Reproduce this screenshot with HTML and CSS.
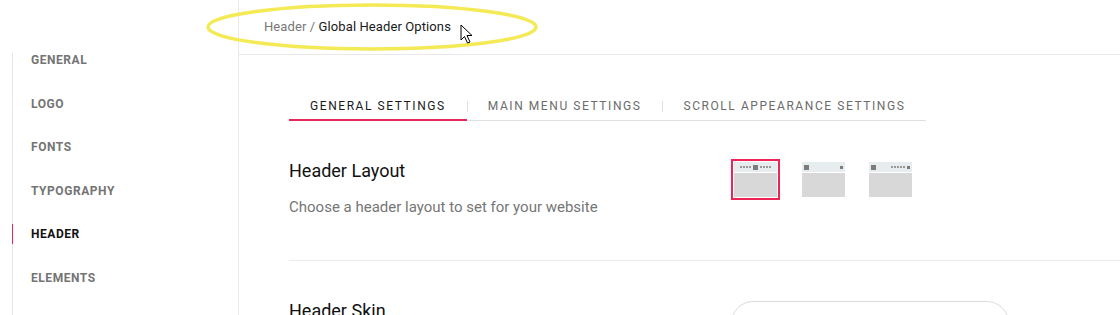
FILE: index.html
```html
<!DOCTYPE html>
<html lang="en">
<head>
  <meta charset="utf-8">
  <title>Global Header Options</title>
  <link rel="stylesheet" href="styles.css">
</head>
<body>
  <div class="page">
    <!-- Left settings menu -->
    <aside class="sidebar">
      <ul class="nav">
        <li>General</li>
        <li>Logo</li>
        <li>Fonts</li>
        <li>Typography</li>
        <li class="active">Header</li>
        <li>Elements</li>
      </ul>
    </aside>

    <main class="main">
      <div class="topbar">
        <span class="crumb-parent">Header</span> / <span class="crumb-current">Global Header Options</span>
        <!-- annotation marker over the breadcrumb -->
        <svg class="highlight" width="340" height="50" viewBox="0 0 340 50">
          <ellipse cx="166" cy="25" rx="164" ry="22" fill="none" stroke="#f4ea55" stroke-width="3.5"/>
        </svg>
        <svg class="cursor" width="14" height="20" viewBox="0 0 14 20">
          <path d="M1 1 L1 16 L4.5 12.5 L7.5 19 L10 18 L7 11.5 L12 11.5 Z" fill="#fff" stroke="#000" stroke-width="1" stroke-linejoin="round"/>
        </svg>
      </div>

      <div class="content">
        <div class="tabs">
          <div class="tab active">General Settings</div>
          <div class="tab">Main Menu Settings</div>
          <div class="tab">Scroll Appearance Settings</div>
        </div>

        <section class="setting">
          <div class="setting-text">
            <h2>Header Layout</h2>
            <p>Choose a header layout to set for your website</p>
          </div>
          <div class="layouts">
            <div class="layout selected">
              <div class="thumb">
                <div class="bar center">
                  <span class="dots"><i></i><i></i><i></i><i></i></span>
                  <span class="logo"></span>
                  <span class="dots"><i></i><i></i><i></i><i></i></span>
                </div>
                <div class="body"></div>
              </div>
            </div>
            <div class="layout">
              <div class="thumb">
                <div class="bar">
                  <span class="logo"></span>
                  <span class="spacer"></span>
                  <span class="mini"></span>
                </div>
                <div class="body"></div>
              </div>
            </div>
            <div class="layout">
              <div class="thumb">
                <div class="bar">
                  <span class="logo"></span>
                  <span class="spacer"></span>
                  <span class="dots"><i></i><i></i><i></i><i></i><i></i></span>
                  <span class="mini"></span>
                </div>
                <div class="body"></div>
              </div>
            </div>
          </div>
        </section>

        <section class="setting">
          <div class="setting-text">
            <h2>Header Skin</h2>
          </div>
          <div class="skin-select"></div>
        </section>
      </div>
    </main>
  </div>
</body>
</html>
```

FILE: styles.css
```css
/* Basic styling */
body {
  margin: 0;
  font-family: Roboto, "Liberation Sans", Arial, sans-serif;
  background: #fff;
  color: #222;
}

.page {
  display: flex;
  height: 100vh;
  overflow: hidden;
}

/* Sidebar */
.sidebar {
  width: 238px;
  flex-shrink: 0;
  border-right: 1px solid #e8e8e8;
  padding-top: 53px;
}

.nav {
  list-style: none;
  margin: 0 0 0 12px;
  padding: 0 0 0 18px;
  border-left: 1px solid #e6e6e6;
  height: 100%;
  display: flex;
  flex-direction: column;
  gap: 29.5px;
}

.nav li {
  position: relative;
  font-size: 12px;
  font-weight: 700;
  line-height: 14px;
  letter-spacing: 0.55px;
  text-transform: uppercase;
  color: #747474;
}

.nav li.active {
  color: #111;
}

/* red marker sits on top of the menu line */
.nav li.active::before {
  content: "";
  position: absolute;
  left: -19px;
  top: -3px;
  width: 1px;
  height: 20px;
  background: #ee2457;
}

/* Main area */
.main {
  flex: 1;
  min-width: 0;
}

.topbar {
  position: relative;
  height: 54px;
  line-height: 54px;
  padding-left: 25px;
  border-bottom: 1px solid #e8e8e8;
  font-size: 13px;
  letter-spacing: 0.1px;
  color: #777;
}

.crumb-current {
  color: #1a1a1a;
}

.highlight {
  position: absolute;
  left: -33px;
  top: 2px;
}

.cursor {
  position: absolute;
  left: 221px;
  top: 24px;
}

.content {
  padding: 40px 0 0 50px;
}

/* Tabs */
.tabs {
  display: inline-flex;
  border-bottom: 1px solid #e0e0e0;
}

.tab {
  position: relative;
  padding: 0 21px 7px;
  font-size: 12px;
  line-height: 14px;
  letter-spacing: 1.57px;
  text-transform: uppercase;
  color: #6c6c6c;
}

.tab + .tab::before {
  content: "";
  position: absolute;
  left: 0;
  top: 2px;
  width: 1px;
  height: 11px;
  background: #e0e0e0;
}

.tab.active {
  color: #1a1a1a;
  border-bottom: 2px solid #e5285a;
  margin-bottom: -1px;
  padding-bottom: 6px;
}

/* Setting rows */
.setting {
  display: grid;
  grid-template-columns: 442px 1fr;
  align-items: start;
  padding: 40px 0 43px;
  border-bottom: 1px solid #ebebeb;
}

.setting h2 {
  margin: 0;
  font-size: 18px;
  font-weight: 400;
  line-height: 20px;
  color: #111;
}

.setting p {
  margin: 16px 0 0;
  font-size: 15px;
  line-height: 20px;
  color: #767676;
}

.layouts {
  display: flex;
  gap: 18.5px;
  margin-top: -2px;
}

.layout {
  border: 2px solid transparent;
  padding: 1px;
}

.layout.selected {
  border-color: #ee2457;
}

.thumb {
  width: 43px;
  height: 35px;
  display: flex;
  flex-direction: column;
}

.bar {
  height: 10px;
  background: #e7ecef;
  display: flex;
  align-items: center;
  padding: 0 2px;
  gap: 2px;
}

.bar.center {
  justify-content: center;
}

.body {
  flex: 1;
  margin-top: 1px;
  background: #d8d8d8;
}

.logo {
  width: 5px;
  height: 5px;
  background: #7c7c7c;
}

.mini {
  width: 3px;
  height: 3px;
  background: #7c7c7c;
}

.spacer {
  flex: 1;
}

.dots {
  display: flex;
  gap: 1px;
}

.dots i {
  width: 2px;
  height: 2px;
  background: #999;
}

.skin-select {
  width: 276px;
  height: 44px;
  border: 1px solid #dcdcdc;
  border-radius: 22px;
}
```
